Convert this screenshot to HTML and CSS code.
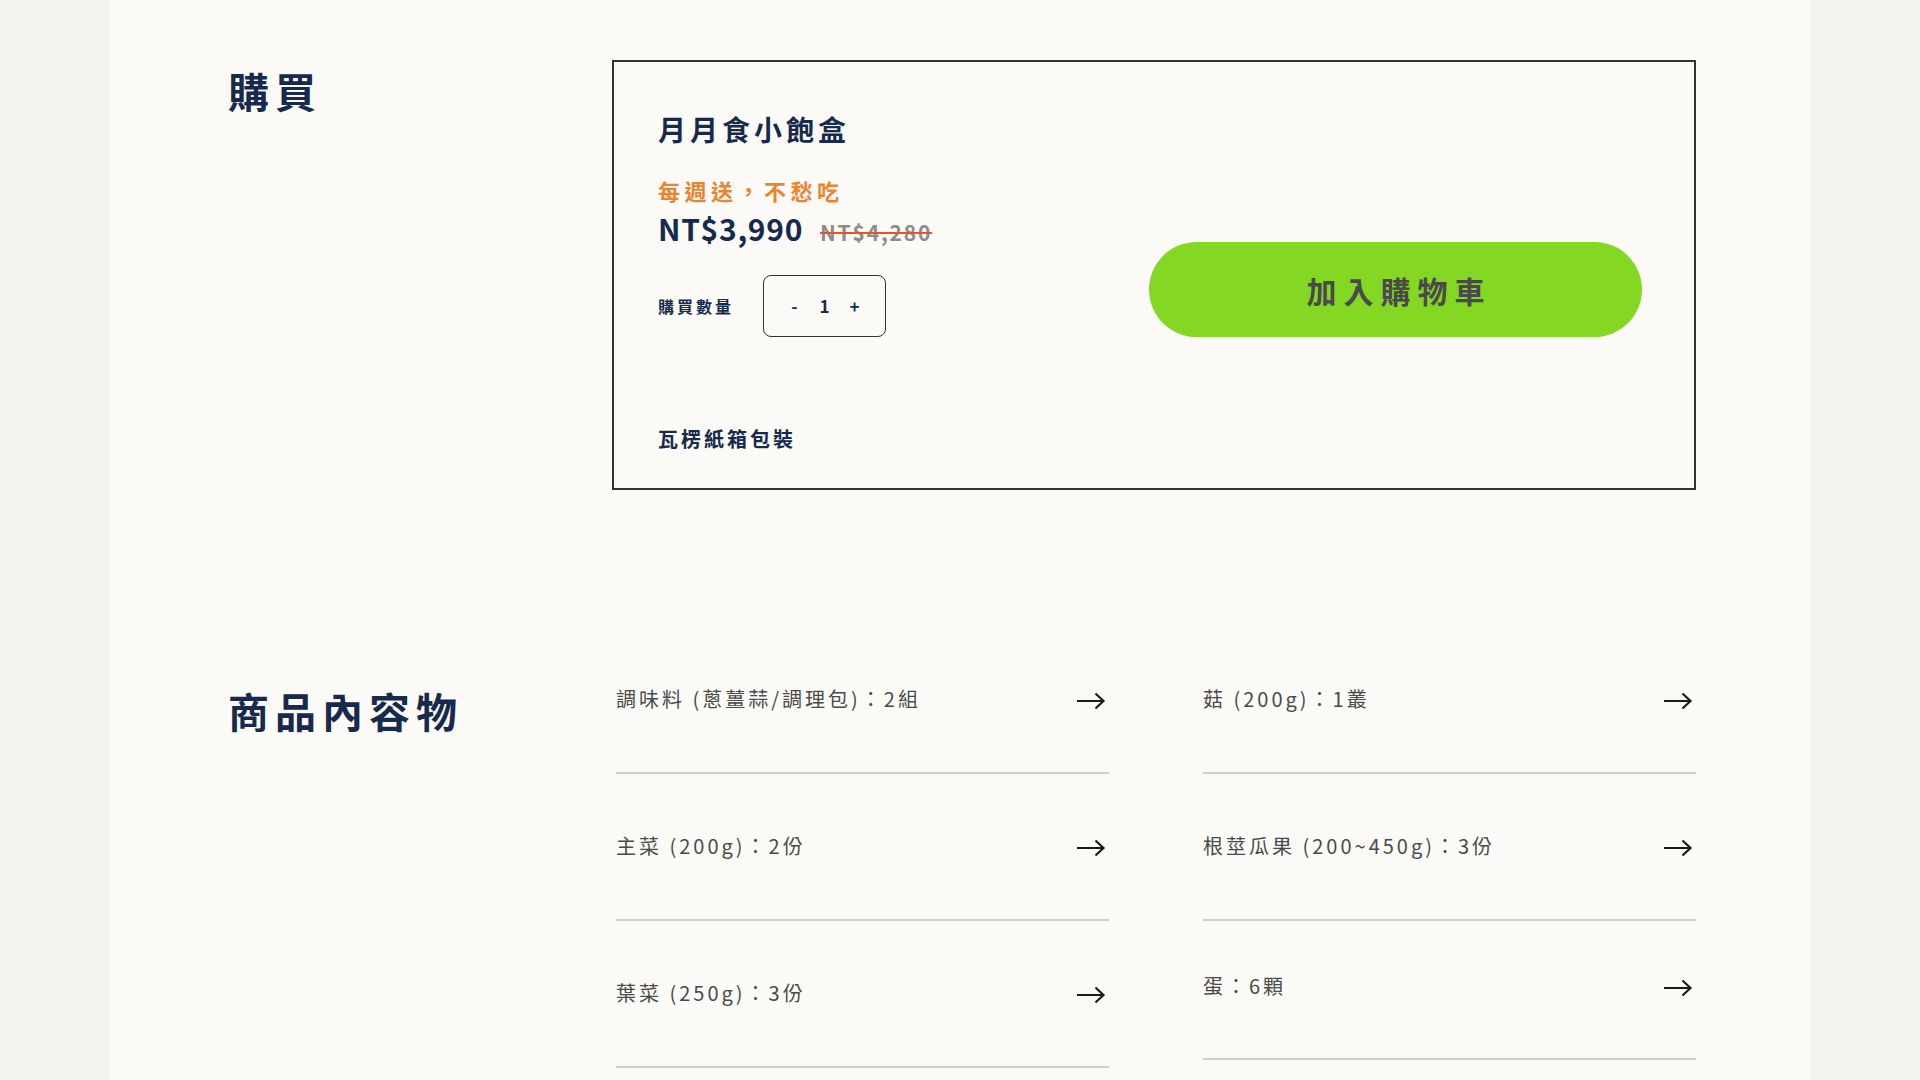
FILE: index.html
```html
<!DOCTYPE html>
<html lang="zh-Hant">
<head>
<meta charset="utf-8">
<title>月月食小飽盒</title>
<link rel="stylesheet" href="styles.css">
</head>
<body>
<div class="page">
  <section class="section">
    <h2 class="section-title">購買</h2>
    <div class="card">
      <div class="card-main">
        <div class="card-info">
          <h3 class="product-name">月月食小飽盒</h3>
          <p class="product-tagline">每週送，不愁吃</p>
          <div class="price-row">
            <span class="price">NT$3,990</span>
            <span class="price-old">NT$4,280</span>
          </div>
          <div class="qty-row">
            <span class="qty-label">購買數量</span>
            <div class="qty-box">
              <button class="qty-btn" type="button">-</button>
              <span class="qty-value">1</span>
              <button class="qty-btn" type="button">+</button>
            </div>
          </div>
        </div>
        <button class="add-cart" type="button">加入購物車</button>
      </div>
      <p class="packaging">瓦楞紙箱包裝</p>
    </div>
  </section>

  <section class="section section--contents">
    <h2 class="section-title section-title--contents">商品內容物</h2>
    <div class="contents-grid">
      <ul class="item-list">
        <li class="item">
          <span class="item-text">調味料 (蔥薑蒜/調理包)：2組</span>
          <svg class="arrow" viewBox="0 0 30 18" aria-hidden="true"><path d="M1 9H28M19.5 1.5L27.5 9L19.5 16.5"/></svg>
        </li>
        <li class="item">
          <span class="item-text">主菜 (200g)：2份</span>
          <svg class="arrow" viewBox="0 0 30 18" aria-hidden="true"><path d="M1 9H28M19.5 1.5L27.5 9L19.5 16.5"/></svg>
        </li>
        <li class="item">
          <span class="item-text">葉菜 (250g)：3份</span>
          <svg class="arrow" viewBox="0 0 30 18" aria-hidden="true"><path d="M1 9H28M19.5 1.5L27.5 9L19.5 16.5"/></svg>
        </li>
      </ul>
      <ul class="item-list">
        <li class="item">
          <span class="item-text">菇 (200g)：1叢</span>
          <svg class="arrow" viewBox="0 0 30 18" aria-hidden="true"><path d="M1 9H28M19.5 1.5L27.5 9L19.5 16.5"/></svg>
        </li>
        <li class="item">
          <span class="item-text">根莖瓜果 (200~450g)：3份</span>
          <svg class="arrow" viewBox="0 0 30 18" aria-hidden="true"><path d="M1 9H28M19.5 1.5L27.5 9L19.5 16.5"/></svg>
        </li>
        <li class="item item--compact">
          <span class="item-text">蛋：6顆</span>
          <svg class="arrow" viewBox="0 0 30 18" aria-hidden="true"><path d="M1 9H28M19.5 1.5L27.5 9L19.5 16.5"/></svg>
        </li>
      </ul>
    </div>
  </section>
</div>
</body>
</html>
```

FILE: styles.css
```css
* {
  box-sizing: border-box;
  margin: 0;
  padding: 0;
}

body {
  background: #f4f3f0;
  font-family: "Noto Sans CJK TC", "Noto Sans CJK SC", sans-serif;
  color: #172a4d;
}

.page {
  width: 1700px;
  min-height: 1080px;
  margin: 0 auto;
  background: #fbfaf7;
  padding: 60px 114px 200px 118px;
}

.section {
  display: grid;
  grid-template-columns: 384px 1084px;
  align-items: start;
}

.section--contents {
  margin-top: 137px;
}

.section-title {
  font-size: 41px;
  line-height: 60px;
  font-weight: 700;
  letter-spacing: 6px;
  color: #172a4d;
}

.section-title--contents {
  margin-top: 53px;
}

/* purchase card */
.card {
  border: 2px solid #333;
  padding: 46px 52px 34px 44px;
}

.card-main {
  display: flex;
  justify-content: space-between;
  align-items: flex-end;
}

.product-name {
  font-size: 28px;
  line-height: 42px;
  font-weight: 700;
  letter-spacing: 4px;
  color: #172a4d;
}

.product-tagline {
  margin-top: 24px;
  font-size: 22px;
  line-height: 33px;
  font-weight: 700;
  letter-spacing: 4.5px;
  color: #ea8430;
}

.price-row {
  display: flex;
  align-items: baseline;
  gap: 17px;
  height: 42px;
}

.price {
  font-size: 30px;
  line-height: 42px;
  font-weight: 700;
  letter-spacing: 0.7px;
  color: #172a4d;
}

.price-old {
  font-size: 21px;
  font-weight: 700;
  letter-spacing: 1.8px;
  color: #8c8c8c;
  text-decoration: line-through;
  text-decoration-color: #e8512a;
  text-decoration-thickness: 2px;
}

.qty-row {
  display: flex;
  align-items: center;
  gap: 29px;
  margin-top: 26px;
}

.qty-label {
  font-size: 16px;
  font-weight: 700;
  letter-spacing: 3px;
  color: #172a4d;
}

.qty-box {
  width: 123px;
  height: 62px;
  border: 1.5px solid #333;
  border-radius: 8px;
  display: flex;
  align-items: center;
  justify-content: center;
}

.qty-btn,
.qty-value {
  width: 30px;
  background: none;
  border: 0;
  font-family: inherit;
  font-size: 17px;
  font-weight: 700;
  color: #172a4d;
  text-align: center;
  line-height: 24px;
}

.add-cart {
  width: 493px;
  height: 95px;
  border: 0;
  border-radius: 48px;
  background: #84d824;
  font-family: inherit;
  font-size: 30px;
  font-weight: 700;
  letter-spacing: 7px;
  padding-left: 7px;
  color: #4a4a4a;
}

.packaging {
  margin-top: 87px;
  font-size: 20px;
  line-height: 30px;
  font-weight: 700;
  letter-spacing: 3px;
  color: #172a4d;
}

/* contents list */
.contents-grid {
  display: grid;
  grid-template-columns: 1fr 1fr;
  column-gap: 94px;
  padding-left: 4px;
  align-items: start;
}

.item-list {
  list-style: none;
}

.item {
  display: flex;
  align-items: center;
  justify-content: space-between;
  padding: 57px 3px 58px 0;
  border-bottom: 2px solid #cfcfd1;
}

.item--compact {
  padding-top: 50px;
  padding-bottom: 57px;
}

.item-text {
  font-size: 20px;
  line-height: 30px;
  letter-spacing: 3px;
  color: #4a4a4a;
}

.arrow {
  width: 30px;
  height: 18px;
  margin-top: 3px;
  fill: none;
  stroke: #1a1a1a;
  stroke-width: 2.2;
}
```
